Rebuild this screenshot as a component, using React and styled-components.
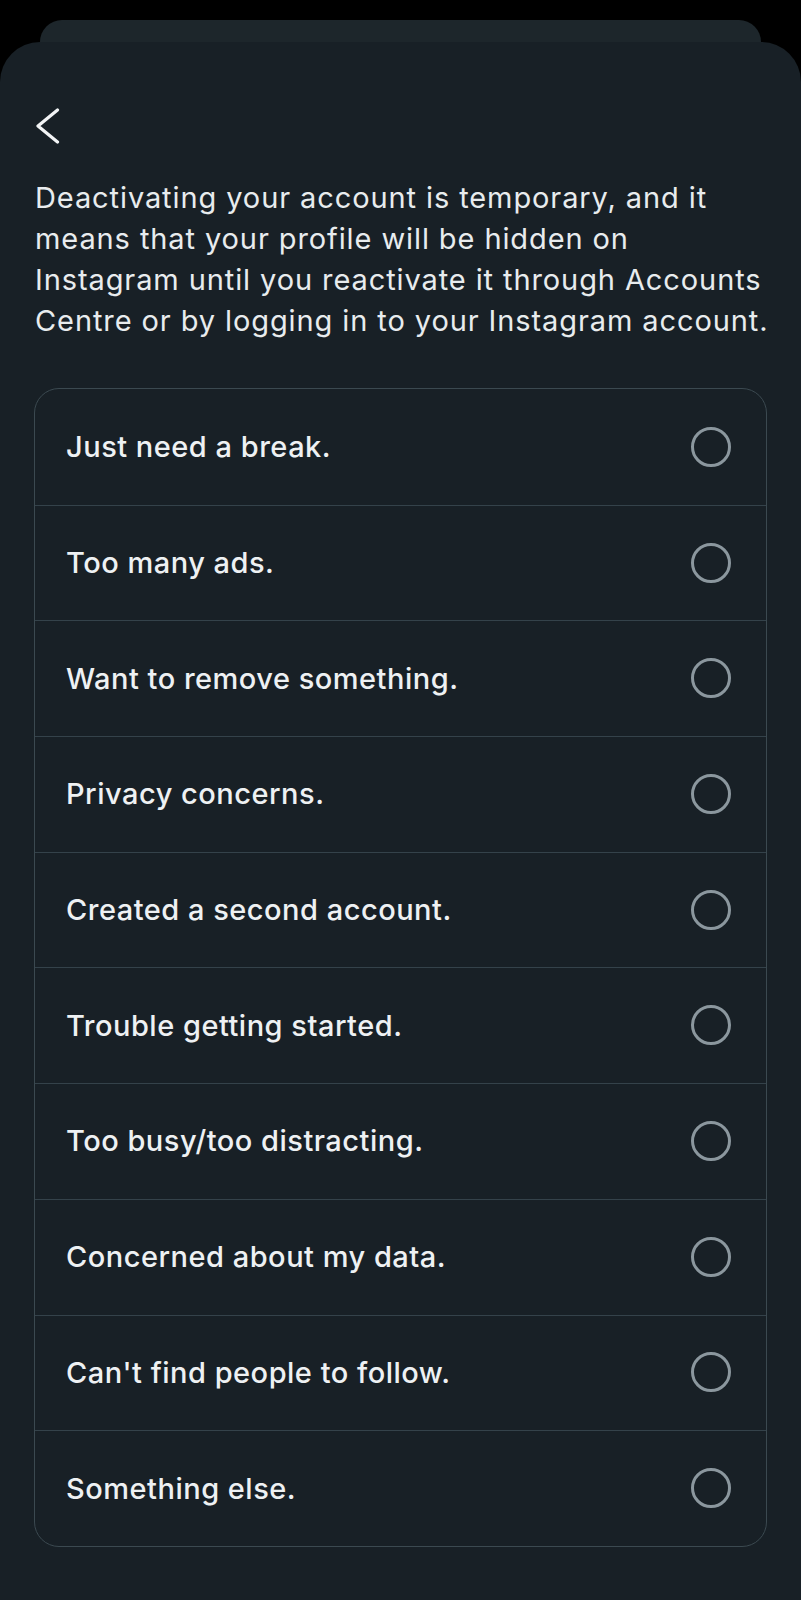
import React from "react";
import styled, { createGlobalStyle } from "styled-components";

const reasons = [
  "Just need a break.",
  "Too many ads.",
  "Want to remove something.",
  "Privacy concerns.",
  "Created a second account.",
  "Trouble getting started.",
  "Too busy/too distracting.",
  "Concerned about my data.",
  "Can't find people to follow.",
  "Something else.",
];

const App = () => {
  return (
    <Screen>
      <GlobalStyle />
      <BackSheet />
      <Sheet>
        <BackButton aria-label="Back">
          <svg width="24" height="36" viewBox="0 0 24 36" fill="none">
            <polyline
              points="21.5,2 2,18 21.5,34"
              stroke="#f2f4f5"
              strokeWidth="3.2"
              strokeLinecap="round"
              strokeLinejoin="round"
            />
          </svg>
        </BackButton>
        <Intro>
          Deactivating your account is temporary, and it
          <br />
          means that your profile will be hidden on
          <br />
          Instagram until you reactivate it through Accounts
          <br />
          Centre or by logging in to your Instagram account.
        </Intro>
        <List>
          {reasons.map((r) => (
            <Row key={r}>
              <Label>{r}</Label>
              <Radio />
            </Row>
          ))}
        </List>
      </Sheet>
    </Screen>
  );
};
export default App;

const GlobalStyle = createGlobalStyle`
  html, body {
    margin: 0;
    padding: 0;
    background: #000;
  }
  * {
    box-sizing: border-box;
  }
`;

const Screen = styled.div`
  width: 100%;
  min-height: 1600px;
  display: flex;
  flex-direction: column;
  padding-top: 20px;
  background: #000;
  font-family: Inter, "Noto Sans", sans-serif;
`;

const BackSheet = styled.div`
  height: 22px;
  margin: 0 40px;
  background: #1d262b;
  border-radius: 30px 30px 0 0;
`;

const Sheet = styled.div`
  flex: 1;
  background: #182026;
  border-radius: 40px 40px 0 0;
  padding: 68px 34px 40px 34px;
  display: flex;
  flex-direction: column;
`;

const BackButton = styled.div`
  width: 24px;
  height: 36px;
  margin-left: 2px;
  margin-top: -2px;
  display: flex;
`;

const Intro = styled.p`
  margin: 33px -24px 0 1px;
  color: #e8ecee;
  font-size: 29px;
  line-height: 41px;
  font-weight: 400;
  letter-spacing: 0.9px;
  white-space: nowrap;
`;

const List = styled.div`
  margin-top: 47px;
  border: 1px solid #3b4950;
  border-radius: 25px;
  display: flex;
  flex-direction: column;
  overflow: hidden;
`;

const Row = styled.div`
  height: 115.7px;
  display: flex;
  align-items: center;
  justify-content: space-between;
  padding: 0 35px 0 31px;
  & + & {
    box-shadow: inset 0 1px 0 #34424a;
  }
`;

const Label = styled.span`
  color: #eef1f3;
  font-size: 29px;
  font-weight: 500;
  letter-spacing: 0.5px;
`;

const Radio = styled.span`
  width: 40px;
  height: 40px;
  border-radius: 50%;
  border: 3px solid #8b979e;
  flex-shrink: 0;
`;
